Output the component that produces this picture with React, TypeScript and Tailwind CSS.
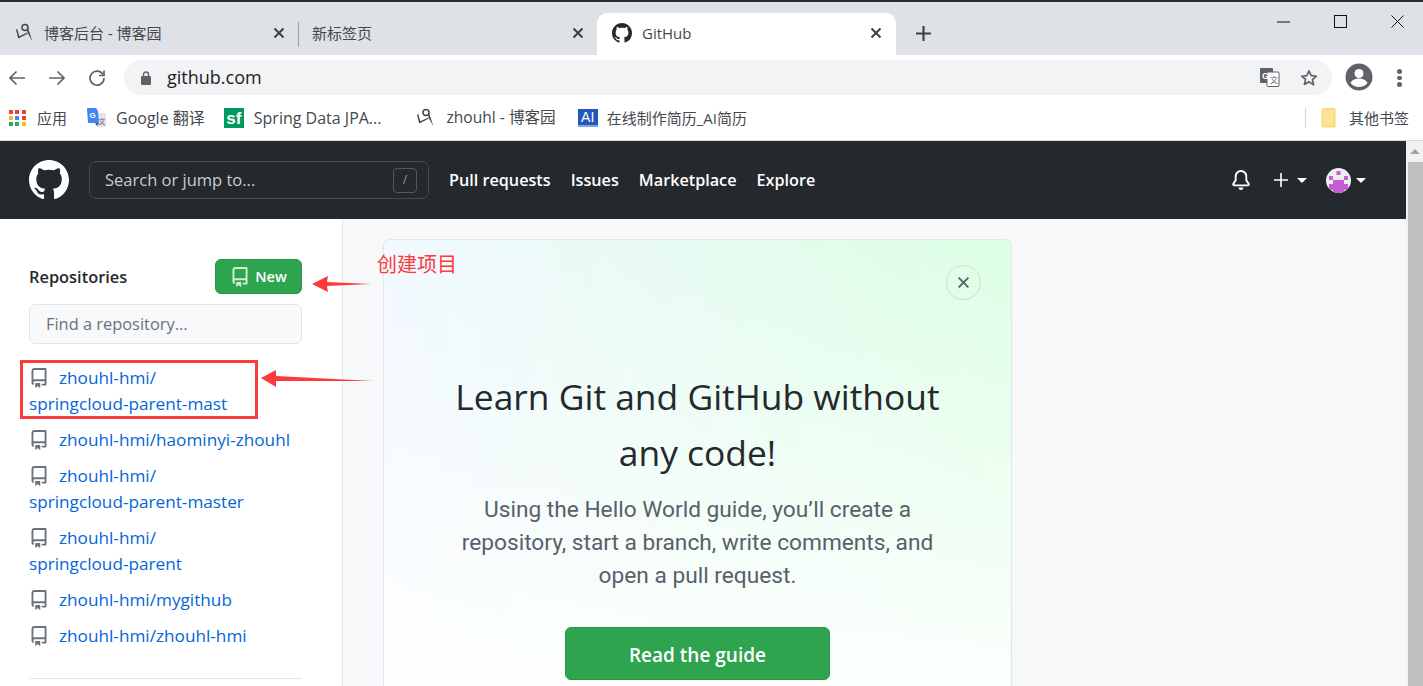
import React from "react";

const FONT = "[font-family:'Open_Sans','Noto_Sans_CJK_SC',sans-serif]";

const GH = "M8 0C3.58 0 0 3.58 0 8c0 3.54 2.29 6.53 5.47 7.59.4.07.55-.17.55-.38 0-.19-.01-.82-.01-1.49-2.01.37-2.53-.49-2.69-.94-.09-.23-.48-.94-.82-1.13-.28-.15-.68-.52-.01-.53.63-.01 1.08.58 1.23.82.72 1.21 1.87.87 2.33.66.07-.52.28-.87.51-1.07-1.78-.2-3.64-.89-3.64-3.95 0-.87.31-1.59.82-2.15-.08-.2-.36-1.02.08-2.12 0 0 .67-.21 2.2.82.64-.18 1.32-.27 2-.27.68 0 1.36.09 2 .27 1.53-1.04 2.2-.82 2.2-.82.44 1.1.16 1.92.08 2.12.51.56.82 1.27.82 2.15 0 3.07-1.87 3.75-3.65 3.95.29.25.54.73.54 1.48 0 1.07-.01 1.93-.01 2.2 0 .21.15.46.55.38A8.013 8.013 0 0016 8c0-4.42-3.58-8-8-8z";
const REPO = "M2 2.5A2.5 2.5 0 014.5 0h8.75a.75.75 0 01.75.75v12.5a.75.75 0 01-.75.75h-2.5a.75.75 0 110-1.5h1.75v-2h-8a1 1 0 00-.714 1.7.75.75 0 01-1.072 1.05A2.495 2.495 0 012 11.5v-9zm10.5-1V9h-8c-.356 0-.694.074-1 .208V2.5a1 1 0 011-1h8zM5 12.25v3.25a.25.25 0 00.4.2l1.45-1.087a.25.25 0 01.3 0L8.6 15.7a.25.25 0 00.4-.2v-3.25a.25.25 0 00-.25-.25h-3.5a.25.25 0 00-.25.25z";
const BELL = "M8 16a2 2 0 001.985-1.75c.017-.137-.097-.25-.235-.25h-3.5c-.138 0-.252.113-.235.25A2 2 0 008 16zM8 1.5A3.5 3.5 0 004.5 5v2.947c0 .346-.102.683-.294.97l-1.703 2.556a.018.018 0 00-.003.01l.001.006c0 .002.002.004.004.006a.017.017 0 00.006.004l.007.001h10.964l.007-.001a.017.017 0 00.006-.004.016.016 0 00.004-.006l.001-.007a.017.017 0 00-.003-.01l-1.703-2.554a1.75 1.75 0 01-.294-.97V5A3.5 3.5 0 008 1.5zM3 5a5 5 0 0110 0v2.947c0 .05.015.098.042.139l1.703 2.555A1.518 1.518 0 0113.482 13H2.518a1.518 1.518 0 01-1.263-2.36l1.703-2.554A.25.25 0 003 7.947V5z";

function Octi({ d, size, className }: { d: string; size: number; className?: string }) {
  return (
    <svg width={size} height={size} viewBox="0 0 16 16" fill="currentColor" fillRule="evenodd" className={className}>
      <path d={d} />
    </svg>
  );
}

function Cnblogs() {
  return (
    <svg width="20" height="20" viewBox="0 0 20 20" className="shrink-0">
      <circle cx="10" cy="4.500" r="3" fill="none" stroke="#444" strokeWidth="1.5" />
      <path d="M12 6l1.500 .5L17.500 18.500 12.500 9.500z" fill="#444" />
      <path d="M1 6.500L2.200 6 4.300 13.300 12 9.800 12.500 10.800 3.200 15.500z" fill="#444" />
    </svg>
  );
}

function CloseX({ size = 12, color = "#3c4043", width = 2 }: { size?: number; color?: string; width?: number }) {
  return (
    <svg width={size} height={size} viewBox="0 0 12 12" stroke={color} strokeWidth={width} fill="none" className="shrink-0">
      <path d="M1.5 1.5l9 9M10.5 1.5l-9 9" />
    </svg>
  );
}

function Caret() {
  return <span className="inline-block w-0 h-0 border-x-[5px] border-x-transparent border-t-[5px] border-t-white" />;
}

function Identicon() {
  return (
    <svg width="25" height="25" viewBox="0 0 25 25" className="shrink-0">
      <defs>
        <clipPath id="idc"><circle cx="12.5" cy="12.5" r="12.5" /></clipPath>
      </defs>
      <g clipPath="url(#idc)">
        <rect width="25" height="25" fill="#eeeef0" />
        <rect x="10.500" y="3" width="4" height="4" fill="#c45fd1" />
        <rect x="3" y="8" width="4" height="4" fill="#c45fd1" />
        <rect x="18" y="8" width="4" height="4" fill="#c45fd1" />
        <rect x="7" y="12" width="11" height="13" fill="#c45fd1" />
        <rect x="3" y="16" width="4" height="6" fill="#c45fd1" />
        <rect x="18" y="16" width="4" height="6" fill="#c45fd1" />
      </g>
    </svg>
  );
}

function AppsGrid() {
  const c = ["#ea4335", "#ea4335", "#ea4335", "#fbbc04", "#4285f4", "#ea4335", "#34a853", "#34a853", "#fbbc04"];
  return (
    <div className="grid grid-cols-3 gap-[2px] w-[17px] h-[17px] shrink-0">
      {c.map((col, i) => (
        <span key={i} className="w-[4px] h-[4px]" style={{ backgroundColor: col }} />
      ))}
    </div>
  );
}

function Tabs() {
  return (
    <div className="h-[53px] bg-[#dee1e6] flex items-end relative text-[15px] text-[#45484c]">
      <div className="w-[298px] h-[42px] flex items-center pl-[15px] pr-[13px] pb-[2px]">
        <Cnblogs />
        <span className="ml-[9px] flex-1">博客后台 - 博客园</span>
        <CloseX />
      </div>
      <div className="w-px h-[25px] bg-[#9b9da0] mb-[8px]" />
      <div className="w-[298px] h-[42px] flex items-center pl-[13px] pr-[13px] pb-[2px]">
        <span className="flex-1">新标签页</span>
        <CloseX />
      </div>
      <div className="w-[299px] h-[42px] bg-white rounded-t-[10px] flex items-center pl-[15px] pr-[14px] pb-[2px]">
        <Octi d={GH} size={20} className="text-[#24292e] shrink-0" />
        <span className="ml-[10px] flex-1">GitHub</span>
        <CloseX />
      </div>
      <div className="ml-[20px] h-[42px] flex items-center pb-[2px]">
        <svg width="15" height="15" viewBox="0 0 15 15" stroke="#3c4043" strokeWidth="2.2"><path d="M7.5 0v15M0 7.5h15" /></svg>
      </div>
      <div className="absolute right-0 top-0 h-[38px] flex items-center">
        <svg width="13" height="13" viewBox="0 0 13 13" stroke="#111" strokeWidth="1" className="mr-[44px]"><path d="M0 7h13" /></svg>
        <svg width="13" height="13" viewBox="0 0 13 13" stroke="#111" strokeWidth="1" fill="none" className="mr-[44px]"><rect x=".5" y=".5" width="12" height="12" /></svg>
        <svg width="13" height="13" viewBox="0 0 13 13" stroke="#111" strokeWidth="1" className="mr-[19px]"><path d="M.5.5l12 12M12.5.5l-12 12" /></svg>
      </div>
    </div>
  );
}

function Toolbar() {
  return (
    <div className="h-[41px] bg-white flex items-start pt-[5px] relative">
      <div className="w-[124px] h-[35px] flex items-center text-[#5f6368]">
        <svg width="18" height="16" viewBox="0 0 18 16" stroke="currentColor" strokeWidth="1.7" fill="none" className="ml-[8px]"><path d="M17 8H2M8.5 1.5L2 8l6.5 6.5" /></svg>
        <svg width="18" height="16" viewBox="0 0 18 16" stroke="currentColor" strokeWidth="1.7" fill="none" className="ml-[22px]"><path d="M1 8h15M9.5 1.5L16 8l-6.5 6.5" /></svg>
        <svg width="18" height="18" viewBox="0 0 18 18" stroke="currentColor" strokeWidth="1.7" fill="none" className="ml-[22px]">
          <path d="M15 5.5A7 7 0 1 0 16 9" />
          <path d="M16 1.5v5h-5" fill="none" />
        </svg>
      </div>
      <div className="w-[1208px] h-[35px] bg-[#f1f3f4] rounded-full flex items-center pl-[16px] pr-[14px]">
        <svg width="12" height="14" viewBox="0 0 12 14" fill="#5f6368" className="shrink-0">
          <rect x="1" y="5" width="10" height="9" rx="1" />
          <path d="M3.5 5V3.5a2.5 2.5 0 0 1 5 0V5" stroke="#5f6368" strokeWidth="1.4" fill="none" />
        </svg>
        <span className="ml-[15px] mb-[2px] text-[18px] text-[#202124] flex-1 leading-none">github.com</span>
        <svg width="20" height="19" viewBox="0 0 20 19" className="mr-[20px] shrink-0">
          <rect x="0" y="0" width="13" height="15" rx="1" fill="#5f6368" />
          <rect x="7" y="4" width="12" height="14.5" rx="1" fill="#fff" stroke="#5f6368" />
          <text x="2" y="11" fontSize="9" fontWeight="700" fill="#fff" fontFamily="Liberation Sans">G</text>
          <text x="10" y="15" fontSize="8" fill="#5f6368" fontFamily="Noto Sans CJK SC">文</text>
        </svg>
        <svg width="18" height="18" viewBox="0 0 24 24" fill="none" stroke="#5f6368" strokeWidth="2.2" strokeLinejoin="round" className="shrink-0">
          <path d="M12 2.5l2.9 6.4 7 .7-5.3 4.6 1.6 6.9L12 17l-6.2 3.6 1.6-6.9L2.100 9.600l7-.7z" />
        </svg>
      </div>
      <svg width="28" height="28" viewBox="0 0 28 28" className="ml-[13px] mt-[3px] shrink-0">
        <circle cx="14" cy="14" r="13.500" fill="#5f6368" />
        <circle cx="14" cy="10.500" r="4.500" fill="#fff" />
        <path d="M5.500 20c2-3.500 5.500-4.500 8.500-4.500s6.500 1 8.500 4.500c-2 2.500-5 4-8.500 4s-6.500-1.500-8.500-4z" fill="#fff" />
      </svg>
      <div className="ml-[24px] mt-[9px] flex flex-col gap-[2px]">
        <span className="w-[4.500px] h-[4.500px] rounded-full bg-[#5f6368]" />
        <span className="w-[4.500px] h-[4.500px] rounded-full bg-[#5f6368]" />
        <span className="w-[4.500px] h-[4.500px] rounded-full bg-[#5f6368]" />
      </div>
    </div>
  );
}

function Bookmarks() {
  return (
    <div className="h-[45px] bg-white border-b border-[#d9d9d9] flex items-center text-[15px] text-[#45484c]">
      <div className="ml-[9px]"><AppsGrid /></div>
      <span className="ml-[11px]">应用</span>
      <svg width="20" height="20" viewBox="0 0 20 20" className="ml-[20px] shrink-0">
        <path d="M9 5h10v14H10z" fill="#e3e5e8" />
        <path d="M0 0h9l2 3 1 12H1z" fill="#4285f4" />
        <path d="M8 15l2 3 2-3z" fill="#2a56c6" />
        <text x="2.500" y="10" fontSize="8" fontWeight="700" fill="#fff" fontFamily="Liberation Sans">G</text>
        <text x="11.500" y="15.500" fontSize="7" fill="#666" fontFamily="Noto Sans CJK SC">文</text>
      </svg>
      <span className="ml-[9px] text-[16px]">Google 翻译</span>
      <div className="ml-[19px] w-[20px] h-[20px] bg-[#009a61] flex items-center justify-center text-white text-[17px] font-bold leading-none [font-family:'Liberation_Sans',sans-serif] shrink-0">sf</div>
      <span className="ml-[10px] text-[16px]">Spring Data JPA...</span>
      <div className="ml-[35px]"><Cnblogs /></div>
      <span className="ml-[10px] text-[15.600px]">zhouhl - 博客园</span>
      <div className="ml-[22px] w-[20px] h-[18px] bg-[#2259b8] border-b-2 border-[#7ea6e0] flex items-center justify-center text-white text-[14px] leading-none [font-family:'Liberation_Sans',sans-serif] shrink-0">AI</div>
      <span className="ml-[9px]">在线制作简历_AI简历</span>
      <div className="ml-auto w-px h-[20px] bg-[#d5d5d5]" />
      <svg width="16" height="20" viewBox="0 0 16 20" className="ml-[15px] shrink-0">
        <path d="M1 1.500A1 1 0 0 1 2 .5h11a1 1 0 0 1 1 1V19H2a1 1 0 0 1-1-1z" fill="#fde293" stroke="#f5d565" />
      </svg>
      <span className="ml-[12px] mr-[14px]">其他书签</span>
    </div>
  );
}

function Header() {
  return (
    <header className="h-[78px] bg-[#24292e] flex items-center text-white shrink-0">
      <Octi d={GH} size={40} className="ml-[29px] shrink-0" />
      <div className="ml-[20px] w-[340px] h-[38px] rounded-[7px] border border-[#454a4f] flex items-center pl-[15px] pr-[11px]">
        <span className="text-[16.500px] text-[#c9cccf] flex-1">Search or jump to...</span>
        <span className="w-[24px] h-[25px] border border-[#55595e] rounded-[4px] flex items-center justify-center text-[12px] text-[#9a9da0]">/</span>
      </div>
      <nav className="ml-[20px] pt-[1px] flex gap-[20px] text-[16.200px] font-semibold">
        <span>Pull requests</span>
        <span>Issues</span>
        <span>Marketplace</span>
        <span>Explore</span>
      </nav>
      <div className="ml-auto flex items-center mr-[40px]">
        <Octi d={BELL} size={20} />
        <svg width="16" height="16" viewBox="0 0 16 16" stroke="#fff" strokeWidth="1.6" className="ml-[22px]"><path d="M8 1v14M1 8h14" /></svg>
        <span className="ml-[8px] flex"><Caret /></span>
        <span className="ml-[19px]"><Identicon /></span>
        <span className="ml-[5px] flex"><Caret /></span>
      </div>
    </header>
  );
}

function RepoLink({ first, second }: { first: string; second?: string }) {
  return (
    <li className="text-[17.200px] leading-[26px] text-[#0366d6] font-medium">
      <Octi d={REPO} size={20} className="inline-block text-[#6a737d] align-[-4px] mr-[10px]" />
      {first}
      {second && <><br />{second}</>}
    </li>
  );
}

function Sidebar() {
  return (
    <aside className="w-[343px] shrink-0 bg-white border-r border-[#e7e9ed] pl-[29px] pr-[40px] pt-[40px]">
      <div className="flex items-center justify-between h-[35px]">
        <span className="pt-[1px] text-[16.400px] font-semibold text-[#24292e]">Repositories</span>
        <div className="w-[87px] h-[35px] rounded-[6px] bg-[#2ea44f] border border-[#2a9448] flex items-center justify-center text-white text-[14.500px] font-semibold gap-[5px]">
          <Octi d={REPO} size={20} className="opacity-80" />
          New
        </div>
      </div>
      <div className="mt-[10px] h-[40px] rounded-[6px] border border-[#e1e4e8] bg-[#f8f9fb] flex items-center pl-[16px] text-[16.400px] text-[#6a737d]">
        Find a repository...
      </div>
      <ul className="mt-[21px] flex flex-col gap-[10px]">
        <RepoLink first="zhouhl-hmi/" second="springcloud-parent-mast" />
        <RepoLink first="zhouhl-hmi/haominyi-zhouhl" />
        <RepoLink first="zhouhl-hmi/" second="springcloud-parent-master" />
        <RepoLink first="zhouhl-hmi/" second="springcloud-parent" />
        <RepoLink first="zhouhl-hmi/mygithub" />
        <RepoLink first="zhouhl-hmi/zhouhl-hmi" />
      </ul>
      <div className="mt-[29px] h-px bg-[#e1e4e8]" />
    </aside>
  );
}

function Card() {
  return (
    <section className="relative w-[629px] h-[500px] ml-[40px] mt-[20px] rounded-[7px] border border-[#e1e6ec] bg-[linear-gradient(to_bottom,rgba(255,255,255,0)_0%,#ffffff_100%),linear-gradient(to_right,#f1f8ff_0%,#dcffe4_100%)] flex flex-col items-center text-center">
      <div className="absolute top-[25px] right-[30px] w-[35px] h-[35px] rounded-full border border-[#d0dcd6] flex items-center justify-center">
        <CloseX size={13} color="#586069" width={1.7} />
      </div>
      <h2 className="mt-[128px] text-[35.400px] leading-[56px] text-[#24292e] w-[520px] font-normal">
        Learn Git and GitHub without any code!
      </h2>
      <p className="mt-[13px] text-[22.700px] leading-[33px] text-[#586069] w-[480px] [font-family:Roboto,sans-serif]">
        Using the Hello World guide, you’ll create a repository, start a branch, write comments, and open a pull request.
      </p>
      <div className="mt-[35px] w-[265px] h-[53px] pt-[3px] rounded-[6px] bg-[#2ea44f] border border-[#2a9448] text-white text-[19px] font-semibold flex items-center justify-center">
        Read the guide
      </div>
    </section>
  );
}

function Annotations() {
  return (
    <>
      <span className="absolute left-[377px] top-[250px] text-[20px] leading-[28px] text-[#fb3b3b] [font-family:'Noto_Sans_CJK_SC',sans-serif]">创建项目</span>
      <svg width="60" height="18" viewBox="0 0 60 18" className="absolute left-[312px] top-[275px]">
        <path d="M0 9L16 1l-1 6 44 2-44 2 1 6z" fill="#fb3b3b" />
      </svg>
      <div className="absolute left-[20px] top-[360px] w-[238px] h-[59px] border-[3px] border-[#fb3b3b]" />
      <svg width="112" height="18" viewBox="0 0 112 18" className="absolute left-[261px] top-[369px]">
        <path d="M0 9L15 1l0 6 97 5-97 0 0 6z" fill="#fb3b3b" />
      </svg>
    </>
  );
}

function Scrollbar() {
  return (
    <div className="w-[17px] shrink-0 bg-[#f1f1f1] flex flex-col items-center">
      <div className="h-[21px] flex items-center justify-center">
        <span className="w-0 h-0 border-x-[5px] border-x-transparent border-b-[5px] border-b-[#a3a3a3]" />
      </div>
      <div className="w-[15px] ml-[2px] flex-1 bg-[#c1c1c1]" />
    </div>
  );
}

export default function App() {
  return (
    <div className={`${FONT} relative w-[1423px] h-[686px] overflow-hidden bg-white flex flex-col`}>
      <div className="h-[2px] bg-[#2b2d33] shrink-0" />
      <Tabs />
      <Toolbar />
      <Bookmarks />
      <div className="flex-1 flex min-h-0">
        <div className="flex-1 flex flex-col min-w-0">
          <Header />
          <div className="flex-1 flex bg-[#f6f8fa] min-h-0 overflow-hidden">
            <Sidebar />
            <div><Card /></div>
          </div>
        </div>
        <Scrollbar />
      </div>
      <Annotations />
    </div>
  );
}
